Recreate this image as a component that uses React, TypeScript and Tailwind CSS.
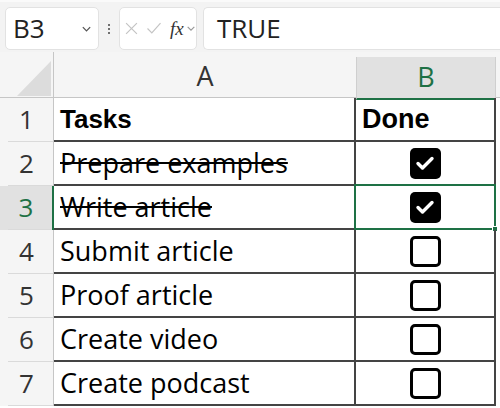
import React from "react";

type Row = { n: number; task: string; done: boolean };

const rows: Row[] = [
  { n: 2, task: "Prepare examples", done: true },
  { n: 3, task: "Write article", done: true },
  { n: 4, task: "Submit article", done: false },
  { n: 5, task: "Proof article", done: false },
  { n: 6, task: "Create video", done: false },
  { n: 7, task: "Create podcast", done: false },
];

const font = { fontFamily: '"Open Sans", "Liberation Sans", sans-serif' };
const arial = { fontFamily: '"Liberation Sans", sans-serif' };

function Chevron({ className = "" }: { className?: string }) {
  return (
    <svg viewBox="0 0 12 8" className={className} fill="none" stroke="currentColor" strokeWidth="1.4">
      <path d="M2 2l4 4 4-4" />
    </svg>
  );
}

function Checkbox({ checked }: { checked: boolean }) {
  if (checked) {
    return (
      <div className="w-[31px] h-[31px] rounded-[5px] bg-black flex items-center justify-center">
        <svg viewBox="0 0 24 24" className="w-[24px] h-[24px]" fill="none" stroke="white" strokeWidth="3.4" strokeLinecap="round" strokeLinejoin="round">
          <path d="M5 12.5l4.5 4.5L19 7.5" />
        </svg>
      </div>
    );
  }
  return <div className="w-[31px] h-[31px] rounded-[5px] border-[3px] border-black bg-white" />;
}

function RowHeader({ n, active }: { n: number; active?: boolean }) {
  return (
    <div className={`h-[44px] flex ${active ? "bg-[#e1e1e1] border-r-2 border-[#1e7145]" : "bg-[#f5f5f5] border-r border-[#c6c6c6]"}`}>
      <div className={`flex-1 ml-[8px] border-b border-[#dadada] flex items-center justify-center text-[26px] ${active ? "text-[#1e7145]" : "text-[#333]"}`}>
        <span className="-ml-[8px]">{n}</span>
      </div>
    </div>
  );
}

export default function App() {
  return (
    <div className="w-[500px] h-[408px] overflow-hidden bg-white text-black" style={font}>
      {/* formula bar */}
      <div className="h-[52px] bg-[#f3f3f3] border-t-2 border-[#fafafa] flex items-start pt-[5px] pl-[5px]">
        <div className="w-[94px] h-[43px] bg-white border border-[#e2e2e2] rounded-[5px] flex items-center pl-[7px] pr-[6px]">
          <span className="text-[26px] text-[#222] flex-1">B3</span>
          <Chevron className="w-[11px] h-[8px] text-[#555]" />
        </div>
        <div className="w-[20px] h-[43px] flex flex-col items-center justify-center gap-[2px]">
          <div className="w-[2px] h-[2px] bg-[#444] rounded-full" />
          <div className="w-[2px] h-[2px] bg-[#444] rounded-full" />
          <div className="w-[2px] h-[2px] bg-[#444] rounded-full" />
        </div>
        <div className="w-[78px] h-[43px] bg-white border border-[#e2e2e2] rounded-[5px] flex items-center pl-[5px] gap-[8px]">
          <svg viewBox="0 0 12 12" className="w-[13px] h-[13px]" stroke="#c4c4c4" strokeWidth="1.1">
            <path d="M1 1l10 10M11 1L1 11" />
          </svg>
          <svg viewBox="0 0 14 12" className="w-[16px] h-[13px]" fill="none" stroke="#c4c4c4" strokeWidth="1.1">
            <path d="M1 6l4 4 8-9" />
          </svg>
          <div className="flex items-center gap-[2px]">
            <span className="text-[19px] italic text-[#333] leading-none" style={{ fontFamily: '"Liberation Serif", serif' }}>fx</span>
            <Chevron className="w-[10px] h-[7px] text-[#999]" />
          </div>
        </div>
        <div className="flex-1 ml-[6px] h-[43px] bg-white border border-[#e2e2e2] rounded-l-[5px] border-r-0 flex items-center pl-[13px]">
          <span className="text-[26px] text-[#222]">TRUE</span>
        </div>
      </div>

      {/* grid */}
      <div className="grid grid-cols-[54px_302px_140px_4px]">
        {/* column headers */}
        <div className="h-[46px] bg-[#f5f5f5] border-r border-b border-[#c6c6c6] flex items-end justify-end pr-[2px] pb-[1px]">
          <div className="w-[34px] h-[35px] bg-[#dcdcdc]" style={{ clipPath: "polygon(100% 0, 100% 100%, 0 100%)" }} />
        </div>
        <div className="h-[46px] bg-[#f5f5f5] border-b border-[#c6c6c6] flex items-center justify-center text-[27px] text-[#333] pt-[4px]">
          A
        </div>
        <div className="h-[46px] bg-[#f5f5f5] flex flex-col">
          <div className="mt-[5px] flex-1 bg-[#e1e1e1] border-x border-[#cfcfcf] border-b-2 border-b-[#1e7145] flex items-center justify-center text-[27px] text-[#1e7145]">
            B
          </div>
        </div>
        <div className="h-[46px] bg-[#f5f5f5] border-b border-[#c6c6c6]" />

        {/* row 1 */}
        <RowHeader n={1} />
        <div className="h-[44px] border-b-2 border-r-2 border-[#444] flex items-center pl-[6px]">
          <span className="text-[26px] font-bold" style={arial}>Tasks</span>
        </div>
        <div className="h-[44px] border-b-2 border-r-2 border-[#444] flex items-center pl-[6px]">
          <span className="text-[27px] font-bold" style={arial}>Done</span>
        </div>
        <div className="h-[44px] bg-white" />

        {rows.map((r) => {
          const active = r.n === 3;
          return (
            <React.Fragment key={r.n}>
              <RowHeader n={r.n} active={active} />
              <div className="h-[44px] border-b-2 border-r-2 border-[#444] flex items-center pl-[6px]">
                <span className={`text-[27px] ${r.done ? "line-through decoration-2" : ""}`}>{r.task}</span>
              </div>
              <div className="relative h-[44px] border-b-2 border-r-2 border-[#444] flex items-center justify-center">
                <Checkbox checked={r.done} />
                {active && (
                  <div className="absolute -left-[2px] -top-[2px] -right-[2px] -bottom-[2px] border-2 border-[#1e7145] pointer-events-none">
                    <div className="absolute -right-[4px] -bottom-[4px] w-[6px] h-[6px] bg-[#1e7145] border border-white" />
                  </div>
                )}
              </div>
              <div className="h-[44px] bg-white" />
            </React.Fragment>
          );
        })}
      </div>
    </div>
  );
}
